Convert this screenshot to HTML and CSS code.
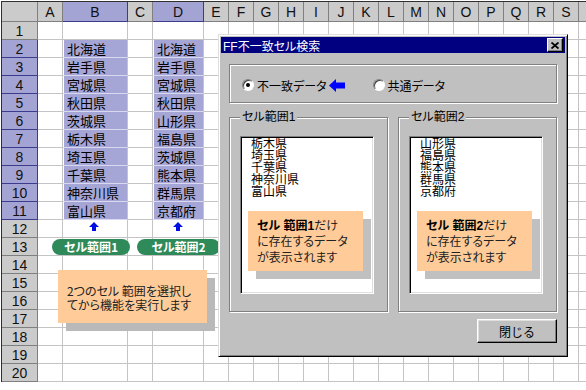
FILE: index.html
```html
<!DOCTYPE html>
<html lang="ja">
<head>
    <meta charset="UTF-8">
    <title>FF不一致セル検索</title>
    <link rel="stylesheet" href="styles.css">
</head>
<body>
<div class="screen">
    <div class="sheet">
        <div class="corner"></div>
        <div class="col-head">A</div>
        <div class="col-head sel">B</div>
        <div class="col-head">C</div>
        <div class="col-head sel">D</div>
        <div class="col-head">E</div>
        <div class="col-head">F</div>
        <div class="col-head">G</div>
        <div class="col-head">H</div>
        <div class="col-head">I</div>
        <div class="col-head">J</div>
        <div class="col-head">K</div>
        <div class="col-head">L</div>
        <div class="col-head">M</div>
        <div class="col-head">N</div>
        <div class="col-head">O</div>
        <div class="col-head">P</div>
        <div class="col-head">Q</div>
        <div class="col-head">R</div>
        <div class="col-head">S</div>
        <div class="col-head"></div>

        <div class="row-head">1</div><div class="cell"></div><div class="cell"></div><div class="cell"></div><div class="cell"></div><div class="cell rest"></div>
        <div class="row-head sel">2</div><div class="cell"></div><div class="cell pick">北海道</div><div class="cell"></div><div class="cell pick">北海道</div><div class="cell rest"></div>
        <div class="row-head sel">3</div><div class="cell"></div><div class="cell pick">岩手県</div><div class="cell"></div><div class="cell pick">岩手県</div><div class="cell rest"></div>
        <div class="row-head sel">4</div><div class="cell"></div><div class="cell pick">宮城県</div><div class="cell"></div><div class="cell pick">宮城県</div><div class="cell rest"></div>
        <div class="row-head sel">5</div><div class="cell"></div><div class="cell pick">秋田県</div><div class="cell"></div><div class="cell pick">秋田県</div><div class="cell rest"></div>
        <div class="row-head sel">6</div><div class="cell"></div><div class="cell pick">茨城県</div><div class="cell"></div><div class="cell pick">山形県</div><div class="cell rest"></div>
        <div class="row-head sel">7</div><div class="cell"></div><div class="cell pick">栃木県</div><div class="cell"></div><div class="cell pick">福島県</div><div class="cell rest"></div>
        <div class="row-head sel">8</div><div class="cell"></div><div class="cell pick">埼玉県</div><div class="cell"></div><div class="cell pick">茨城県</div><div class="cell rest"></div>
        <div class="row-head sel">9</div><div class="cell"></div><div class="cell pick">千葉県</div><div class="cell"></div><div class="cell pick">熊本県</div><div class="cell rest"></div>
        <div class="row-head sel">10</div><div class="cell"></div><div class="cell pick">神奈川県</div><div class="cell"></div><div class="cell pick">群馬県</div><div class="cell rest"></div>
        <div class="row-head sel">11</div><div class="cell"></div><div class="cell pick">富山県</div><div class="cell"></div><div class="cell pick">京都府</div><div class="cell rest"></div>
        <div class="row-head">12</div><div class="cell"></div><div class="cell"></div><div class="cell"></div><div class="cell"></div><div class="cell rest"></div>
        <div class="row-head">13</div><div class="cell"></div><div class="cell"></div><div class="cell"></div><div class="cell"></div><div class="cell rest"></div>
        <div class="row-head">14</div><div class="cell"></div><div class="cell"></div><div class="cell"></div><div class="cell"></div><div class="cell rest"></div>
        <div class="row-head">15</div><div class="cell"></div><div class="cell"></div><div class="cell"></div><div class="cell"></div><div class="cell rest"></div>
        <div class="row-head">16</div><div class="cell"></div><div class="cell"></div><div class="cell"></div><div class="cell"></div><div class="cell rest"></div>
        <div class="row-head">17</div><div class="cell"></div><div class="cell"></div><div class="cell"></div><div class="cell"></div><div class="cell rest"></div>
        <div class="row-head">18</div><div class="cell"></div><div class="cell"></div><div class="cell"></div><div class="cell"></div><div class="cell rest"></div>
        <div class="row-head">19</div><div class="cell"></div><div class="cell"></div><div class="cell"></div><div class="cell"></div><div class="cell rest"></div>
        <div class="row-head">20</div><div class="cell"></div><div class="cell"></div><div class="cell"></div><div class="cell"></div><div class="cell rest"></div>
    </div>

    <!-- shapes drawn on the sheet -->
    <svg class="up-arrow arrow-b" width="10" height="9" viewBox="0 0 10 9"><polygon points="5,0 10,5 7,5 7,9 3,9 3,5 0,5" fill="#0010e0"/></svg>
    <svg class="up-arrow arrow-d" width="10" height="9" viewBox="0 0 10 9"><polygon points="5,0 10,5 7,5 7,9 3,9 3,5 0,5" fill="#0010e0"/></svg>
    <div class="pill pill-b">セル範囲1</div>
    <div class="pill pill-d">セル範囲2</div>
    <div class="memo">2つのセル 範囲を選択し<br>てから機能を実行します</div>

    <!-- dialog -->
    <div class="dialog">
        <div class="title-bar">
            <span>FF不一致セル検索</span>
            <span class="close-btn">
                <svg width="8" height="7" viewBox="0 0 8 7"><path d="M0.5 0.5 L7.5 6.5 M7.5 0.5 L0.5 6.5" stroke="#000" stroke-width="1.8"/></svg>
            </span>
        </div>
        <div class="dialog-body">
            <div class="mode-box">
                <span class="radio checked"></span>
                <span class="radio-label">不一致データ</span>
                <svg class="left-arrow" width="16" height="13" viewBox="0 0 16 13"><polygon points="0,6.5 7,0 7,3.5 16,3.5 16,9.5 7,9.5 7,13" fill="#0000ff"/></svg>
                <span class="radio second"></span>
                <span class="radio-label">共通データ</span>
            </div>

            <div class="groups">
                <div class="group">
                    <span class="legend">セル範囲1</span>
                    <div class="listbox">
                        <ul>
                            <li>栃木県</li>
                            <li>埼玉県</li>
                            <li>千葉県</li>
                            <li>神奈川県</li>
                            <li>富山県</li>
                        </ul>
                        <div class="hint"><b>セル 範囲1</b>だけ<br>に存在するデータ<br>が表示されます</div>
                    </div>
                </div>
                <div class="group wide">
                    <span class="legend">セル範囲2</span>
                    <div class="listbox">
                        <ul>
                            <li>山形県</li>
                            <li>福島県</li>
                            <li>熊本県</li>
                            <li>群馬県</li>
                            <li>京都府</li>
                        </ul>
                        <div class="hint"><b>セル 範囲2</b>だけ<br>に存在するデータ<br>が表示されます</div>
                    </div>
                </div>
            </div>

            <div class="footer">
                <button class="btn">閉じる</button>
            </div>
        </div>
    </div>
</div>
</body>
</html>
```

FILE: styles.css
```css
body {
    margin: 0;
    background: #fff;
    font-family: 'Liberation Sans', 'Noto Sans CJK JP', sans-serif;
}

.screen {
    position: relative;
    width: 586px;
    height: 390px;
    overflow: hidden;
    padding: 1px 0 0 1px;
    box-sizing: border-box;
}

/* spreadsheet */
.sheet {
    display: grid;
    grid-template-columns: 36px 25px 65px 25px 51px repeat(16, 25px);
    grid-template-rows: 20px repeat(20, 18px);
    border-top: 1px solid #303030;
    border-left: 1px solid #303030;
    width: max-content;
}

.corner,
.col-head,
.row-head {
    background: #cbcbcb;
    border-right: 1px solid #7f7f7f;
    border-bottom: 1px solid #7f7f7f;
    box-sizing: border-box;
    font-size: 14px;
    color: #111;
    display: flex;
    align-items: center;
    justify-content: center;
}

.col-head.sel,
.row-head.sel {
    background: #a4a4d4;
    border-color: #3c3c8c;
}

.cell {
    box-sizing: border-box;
    border-right: 1px solid #c4c4c4;
    border-bottom: 1px solid #c4c4c4;
    font-family: 'Noto Sans CJK JP', sans-serif;
    font-size: 13px;
    line-height: 17px;
    padding-left: 4px;
    white-space: nowrap;
}

.cell.pick {
    background: #a6a6d6;
    border-bottom-color: #d8d8ee;
    box-shadow: inset 1px 0 0 #fff;
    color: #000;
}

.cell.rest {
    grid-column: span 16;
    border-right: none;
    padding: 0;
    background: repeating-linear-gradient(to right, transparent 0 24px, #c4c4c4 24px 25px);
}

/* shapes on the sheet */
.up-arrow {
    position: absolute;
    top: 222px;
}

.arrow-b { left: 89px; }
.arrow-d { left: 173px; }

.pill {
    position: absolute;
    top: 239px;
    height: 16px;
    border-radius: 8px;
    background: #2f8a5a;
    color: #fff;
    font-family: 'Noto Sans CJK JP', sans-serif;
    font-weight: bold;
    font-size: 12px;
    line-height: 16px;
    text-align: center;
    font-feature-settings: "palt";
}

.pill-b { left: 52px; width: 78px; }
.pill-d { left: 137px; width: 83px; }

.memo {
    position: absolute;
    left: 58px;
    top: 270px;
    width: 149px;
    height: 53px;
    box-sizing: border-box;
    padding: 14px 0 0 9px;
    background: #ffcc99;
    box-shadow: 8px 8px 0 #b9b9b9;
    font-family: 'Noto Sans CJK JP', sans-serif;
    font-size: 12px;
    line-height: 14px;
    color: #222;
    font-feature-settings: "palt";
}

/* dialog */
.dialog {
    position: absolute;
    left: 218px;
    top: 34px;
    width: 350px;
    height: 323px;
    box-sizing: border-box;
    padding: 2px;
    background: #c0c0c0;
    border: 1px solid;
    border-color: #dfdfdf #000 #000 #dfdfdf;
    box-shadow: inset 1px 1px 0 #fff, inset -1px -1px 0 #808080;
    font-family: 'Liberation Sans', 'Noto Sans CJK JP', sans-serif;
    font-size: 12px;
    font-feature-settings: "palt";
    color: #000;
}

.title-bar {
    height: 16px;
    background: #000080;
    color: #fff;
    display: flex;
    align-items: center;
    justify-content: space-between;
    padding-left: 2px;
    font-size: 12px;
}

.close-btn {
    width: 16px;
    height: 14px;
    box-sizing: border-box;
    margin-right: 2px;
    background: #c0c0c0;
    border: 1px solid;
    border-color: #fff #000 #000 #fff;
    box-shadow: inset -1px -1px 0 #808080;
    display: flex;
    align-items: center;
    justify-content: center;
}

.dialog-body {
    padding: 11px 8px 0;
}

.mode-box {
    height: 39px;
    box-sizing: border-box;
    border: 1px solid #808080;
    box-shadow: inset 1px 1px 0 #fff, 1px 1px 0 #fff;
    display: flex;
    align-items: center;
    padding: 3px 0 0 12px;
}

.radio {
    width: 12px;
    height: 12px;
    box-sizing: border-box;
    border-radius: 50%;
    border: 1px solid;
    border-color: #808080 #fff #fff #808080;
    background: #fff;
    box-shadow: inset 1px 1px 0 #404040;
    display: flex;
    align-items: center;
    justify-content: center;
}

.radio.checked::after {
    content: '';
    width: 4px;
    height: 4px;
    border-radius: 50%;
    background: #000;
}

.radio.second {
    margin-left: 28px;
}

.radio-label {
    margin-left: 3px;
}

.left-arrow {
    margin-left: 2px;
}

.groups {
    display: flex;
    gap: 10px;
    margin-top: 14px;
}

.group {
    position: relative;
    width: 159px;
    height: 195px;
    box-sizing: border-box;
    border: 1px solid #808080;
    box-shadow: inset 1px 1px 0 #fff, 1px 1px 0 #fff;
    padding: 18px 13px 17px 10px;
}

.legend {
    position: absolute;
    top: -8px;
    left: 10px;
    padding: 0 2px;
    background: #c0c0c0;
    line-height: 14px;
}

.listbox {
    height: 100%;
    box-sizing: border-box;
    background: #fff;
    border: 1px solid;
    border-color: #808080 #fff #fff #808080;
    box-shadow: inset 1px 1px 0 #000, inset -1px -1px 0 #dfdfdf;
    padding: 1px 0 0 10px;
}

.listbox ul {
    list-style: none;
    margin: 0;
    padding: 0;
    font-size: 12px;
    line-height: 12px;
    font-feature-settings: normal;
}

.hint {
    margin: 13px 0 0 -3px;
    width: 115px;
    height: 60px;
    box-sizing: border-box;
    padding: 7px 0 0 9px;
    background: #ffcc99;
    box-shadow: 8px 8px 0 #c0c0c0;
    font-size: 12px;
    line-height: 16px;
    color: #222;
}

.hint b {
    color: #000;
}

.footer {
    display: flex;
    justify-content: flex-end;
    margin-top: 7px;
}

.btn {
    width: 80px;
    height: 24px;
    padding: 0;
    background: #c0c0c0;
    border: 1px solid;
    border-color: #fff #000 #000 #fff;
    box-shadow: inset -1px -1px 0 #808080, inset 1px 1px 0 #dfdfdf;
    font-family: 'Liberation Sans', 'Noto Sans CJK JP', sans-serif;
    font-size: 12px;
    color: #000;
}
```
